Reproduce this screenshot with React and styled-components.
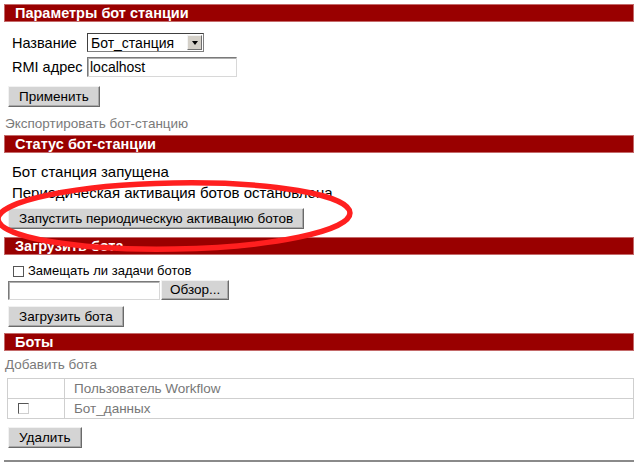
import styled, { createGlobalStyle } from "styled-components";

const GlobalStyle = createGlobalStyle`
  html, body {
    margin: 0;
    padding: 0;
    background: #ffffff;
  }
  body {
    font-family: "Liberation Sans", Arial, sans-serif;
    color: #000;
  }
`;

export default function App() {
  return (
    <Page>
      <GlobalStyle />

      <Header>Параметры бот станции</Header>
      <FieldRow $top={11}>
        <Label>Название</Label>
        <FakeSelect>
          <span>Бот_станция</span>
          <SelectArrow />
        </FakeSelect>
      </FieldRow>
      <FieldRow $top={5}>
        <Label>RMI адрес</Label>
        <TextBox $width={150}>localhost</TextBox>
      </FieldRow>
      <Button $top={9}>Применить</Button>
      <GrayLink $top={9}>Экспортировать бот-станцию</GrayLink>

      <Header $top={3}>Статус бот-станции</Header>
      <StatusText $top={8}>Бот станция запущена</StatusText>
      <StatusText>Периодическая активация ботов остановлена</StatusText>
      <Button $top={5}>Запустить периодическую активацию ботов</Button>

      <Header $top={8}>Загрузить бота</Header>
      <CheckRow>
        <Check />
        Замещать ли задачи ботов
      </CheckRow>
      <FileRow>
        <TextBox $width={152} $tight />
        <Button $small>Обзор...</Button>
      </FileRow>
      <Button $top={6}>Загрузить бота</Button>

      <Header $top={6}>Боты</Header>
      <GrayLink $top={6} $narrow>
        Добавить бота
      </GrayLink>
      <Grid>
        <tbody>
          <tr>
            <Cell $first />
            <Cell>Пользователь Workflow</Cell>
          </tr>
          <tr>
            <Cell $first>
              <SunkCheck />
            </Cell>
            <Cell>Бот_данных</Cell>
          </tr>
        </tbody>
      </Grid>
      <Button $top={8}>Удалить</Button>
      <Rule />

      <Scribble width="640" height="467" viewBox="0 0 640 467">
        <ellipse
          cx="174"
          cy="216"
          rx="176"
          ry="33"
          transform="rotate(-1 174 216)"
          fill="none"
          stroke="#ff1f1f"
          strokeWidth="5.5"
        />
      </Scribble>
    </Page>
  );
}

const Page = styled.div`
  position: relative;
  width: 640px;
  height: 467px;
  overflow: hidden;
  padding: 4px 6px 0 4px;
  box-sizing: border-box;
  display: flex;
  flex-direction: column;
  align-items: flex-start;
`;

const Header = styled.div`
  align-self: stretch;
  height: 18px;
  margin-top: ${(p) => p.$top || 0}px;
  box-sizing: border-box;
  background: #990000;
  border: 1px solid #c46a6a;
  padding-left: 10px;
  color: #fff;
  font-size: 14.5px;
  font-weight: 700;
  line-height: 16px;
`;

const FieldRow = styled.div`
  display: flex;
  align-items: center;
  margin-top: ${(p) => p.$top || 0}px;
  padding-left: 8px;
`;

const Label = styled.span`
  width: 75px;
  font-size: 14.5px;
`;

const FakeSelect = styled.div`
  width: 117px;
  height: 19px;
  box-sizing: border-box;
  display: flex;
  align-items: center;
  justify-content: space-between;
  border: 1px solid #7f7f7f;
  border-top-color: #404040;
  border-left-color: #404040;
  padding-left: 3px;
  font-size: 14px;
  background: #fff;
`;

const SelectArrow = styled.span`
  width: 15px;
  height: 15px;
  margin-right: 1px;
  box-sizing: border-box;
  background: #d4d0c8;
  border: 1px solid;
  border-color: #f4f4f4 #707070 #707070 #f4f4f4;
  display: flex;
  align-items: center;
  justify-content: center;

  &::after {
    content: "";
    border-left: 3px solid transparent;
    border-right: 3px solid transparent;
    border-top: 4px solid #000;
  }
`;

const TextBox = styled.div`
  width: ${(p) => p.$width}px;
  height: ${(p) => (p.$tight ? 19 : 20)}px;
  box-sizing: border-box;
  border: 1px solid;
  border-color: #7a7a7a #d8d8d8 #d8d8d8 #7a7a7a;
  box-shadow: inset 1px 1px 0 #b0b0b0;
  background: #fff;
  padding-left: 2px;
  font-size: 14px;
  line-height: 18px;
`;

const Button = styled.button`
  margin-top: ${(p) => p.$top || 0}px;
  margin-left: ${(p) => (p.$small ? 0 : 4)}px;
  height: ${(p) => (p.$small ? 20 : 21)}px;
  padding: 0 ${(p) => (p.$small ? 8 : 10)}px;
  box-sizing: border-box;
  background: #d4d4d4;
  border: 1px solid;
  border-color: #f2f2f2 #6a6a6a #6a6a6a #f2f2f2;
  box-shadow: inset -1px -1px 0 #a8a8a8;
  font-family: "Liberation Sans", Arial, sans-serif;
  font-size: 13.5px;
  color: #000;
  line-height: 18px;
`;

const GrayLink = styled.div`
  margin-top: ${(p) => p.$top || 0}px;
  padding-left: 1px;
  font-family: ${(p) =>
    p.$narrow
      ? `"Liberation Sans Narrow", "Arial Narrow", "Liberation Sans", sans-serif`
      : `"Liberation Sans", Arial, sans-serif`};
  font-size: 13.5px;
  line-height: 16px;
  color: #7a7a7a;
`;

const StatusText = styled.div`
  margin-top: ${(p) => p.$top || 0}px;
  padding-left: 8px;
  font-size: 15px;
  line-height: 21px;
`;

const CheckRow = styled.label`
  margin-top: 8px;
  padding-left: 9px;
  display: flex;
  align-items: center;
  gap: 4px;
  font-size: 13px;
  line-height: 16px;
`;

const Check = styled.span`
  width: 11px;
  height: 11px;
  box-sizing: border-box;
  border: 1px solid #555;
  background: #fff;
`;

const FileRow = styled.div`
  margin-top: 1px;
  padding-left: 4px;
  display: flex;
  align-items: flex-end;
  gap: 1px;
`;

const Grid = styled.table`
  margin-top: 5px;
  margin-left: 3px;
  width: 627px;
  border-collapse: collapse;
  border: 1px solid #cfcfcf;
  font-family: "Liberation Sans Narrow", "Arial Narrow", "Liberation Sans",
    sans-serif;
  font-size: 13.5px;
  color: #777;
`;

const Cell = styled.td`
  border: 1px solid #cfcfcf;
  height: 19px;
  padding: 0 0 0 ${(p) => (p.$first ? 4 : 9)}px;
  width: ${(p) => (p.$first ? "52px" : "auto")};
  text-align: left;
  line-height: 17px;
`;

const SunkCheck = styled.span`
  display: block;
  margin-left: 6px;
  width: 11px;
  height: 11px;
  box-sizing: border-box;
  border: 1px solid;
  border-color: #555 #cfcfcf #cfcfcf #555;
  background: #fff;
`;

const Rule = styled.div`
  align-self: stretch;
  margin-top: 12px;
  height: 2px;
  background: #8a8a8a;
`;

const Scribble = styled.svg`
  position: absolute;
  top: 0;
  left: 0;
  pointer-events: none;
`;
